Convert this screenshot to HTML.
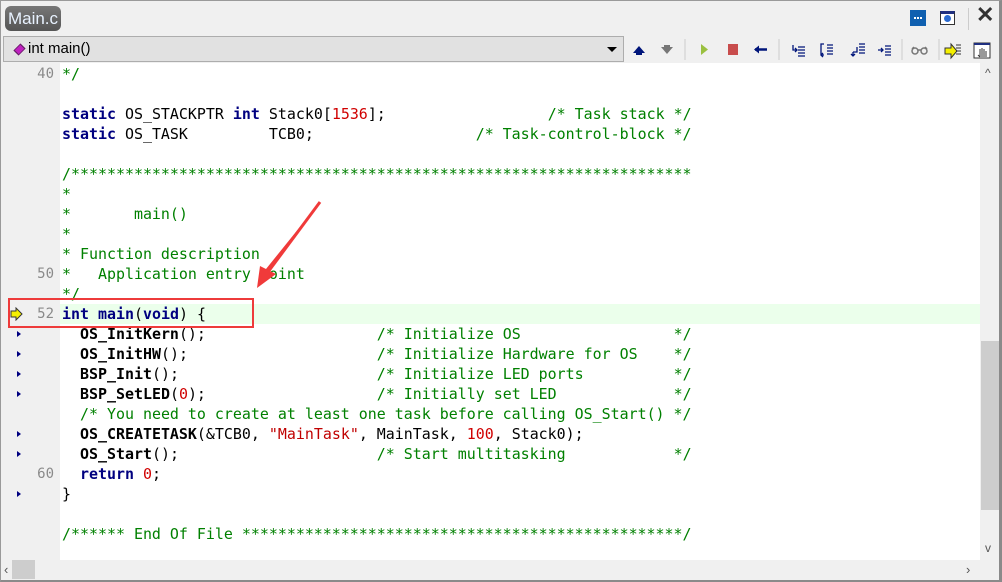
<!DOCTYPE html>
<html><head><meta charset="utf-8"><style>
*{margin:0;padding:0;box-sizing:border-box}
body{width:1002px;height:582px;overflow:hidden;background:#f0f0f0;font-family:"Liberation Sans",sans-serif;position:relative}
.frame{position:absolute;left:0;top:0;width:1002px;height:582px;border:1px solid #9a9a9a;border-right:3px solid #8a8a8a;border-bottom:2px solid #8a8a8a}
.tab{position:absolute;left:5px;top:6px;width:56px;height:25px;border-radius:6px;background:linear-gradient(#777,#555);color:#e8f2ff;font-size:17px;line-height:25px;text-align:center}
.combo{position:absolute;left:3px;top:36px;width:621px;height:26px;background:#e1e1e1;border:1px solid #adadad}
.combo span{position:absolute;left:24px;top:3px;font-size:15px;color:#000}
.dia{position:absolute;left:11px;top:8px;width:9px;height:9px;background:#c020c0;transform:rotate(45deg) scale(.8,1.1);border:1px solid #602060}
.dd{position:absolute;right:6px;top:10px;border-left:5px solid transparent;border-right:5px solid transparent;border-top:5px solid #000}
.code{position:absolute;left:1px;top:63px;width:979px;height:497px;background:#fff;overflow:hidden}
.gut{position:absolute;left:0;top:0;width:59px;height:497px;background:#f0f0f0}
.hl{position:absolute;left:59px;top:241px;width:920px;height:20px;background:#ebffeb}
.ln{position:absolute;left:0;width:1000px;height:20px;font-family:"DejaVu Sans Mono","Liberation Mono",monospace;font-size:14.95px;line-height:20px;white-space:pre}
.num{position:absolute;left:20px;width:33px;text-align:right;color:#8a8a8a;font-size:14px}
.t{position:absolute;left:61px}
.c{color:#008000}.k{color:#000080;font-weight:bold}.b{font-weight:bold;color:#000}.n{color:#d00000}.s{color:#c00000}
.mk{position:absolute;left:16px;top:7px;width:0;height:0;border-top:3px solid transparent;border-bottom:3px solid transparent;border-left:4px solid #000080}
.vs{position:absolute;left:981px;top:63px;width:18px;height:497px;background:#f0f0f0}
.hs{position:absolute;left:1px;top:560px;width:980px;height:20px;background:#f0f0f0}
</style></head><body>
<div class="frame"></div>
<div class="tab">Main.c</div>
<div style="position:absolute;left:910px;top:10px;width:16px;height:16px;background:#1060b0"></div>
<div style="position:absolute;left:914px;top:17px;width:8px;height:2px;border-top:2px dotted #fff"></div>
<div style="position:absolute;left:940px;top:11px;width:15px;height:14px;border:1px solid #333;border-top:3px solid #203080;background:#fff"></div>
<div style="position:absolute;left:944px;top:15px;width:7px;height:7px;border-radius:50%;background:#2a6ad0"></div>
<div style="position:absolute;left:968px;top:8px;width:1px;height:22px;background:#ccc"></div>
<div style="position:absolute;left:976px;top:2px;font-size:22px;font-weight:bold;color:#333">✕</div>
<div class="combo"><div class="dia"></div><span>int main()</span><div class="dd"></div></div>
<svg style="position:absolute;left:625px;top:36px" width="377" height="27">
<polygon points="8,17 14,10 20,17" fill="#00157a"/><rect x="11" y="16" width="6" height="3" fill="#00157a"/>
<rect x="39" y="9" width="6" height="3" fill="#777"/><polygon points="36,11 42,18 48,11" fill="#777"/>
<line x1="60" y1="3" x2="60" y2="24" stroke="#ccc"/>
<polygon points="76,8 83,13.5 76,19" fill="#9ac040"/>
<rect x="103" y="8" width="10" height="11" fill="#c84c4c"/>
<path d="M130,13.5h12" stroke="#00157a" stroke-width="2.5"/><polygon points="129,13.5 134,9.5 134,17.5" fill="#00157a"/>
<line x1="154" y1="3" x2="154" y2="24" stroke="#ccc"/>
<g stroke="#00157a" fill="none" stroke-width="1.3"><path d="M168,9v5h4M170,12l2,2-2,2"/><path d="M173,11h7M173,14h7M173,17h7M173,20h7"/>
<path d="M199,8h-3v11h3M196,19l2,-2M196,19l2,2"/><path d="M202,9h6M202,12h6M202,15h6M202,18h6"/>
<path d="M228,16v4M226,18l2,2 2,-2M228,16h4v-5"/><path d="M234,8h6M234,11h6M234,14h6M234,17h6"/>
<path d="M253,14h5M256,12l2,2-2,2"/><path d="M260,10h6M260,13h6M260,16h6M260,19h6"/></g>
<line x1="277" y1="3" x2="277" y2="24" stroke="#ccc"/>
<g stroke="#777" fill="none" stroke-width="1.5"><circle cx="290" cy="15" r="3"/><circle cx="299" cy="15" r="3"/><path d="M287,13l2,-2M302,13l-2,-2M293,14h3"/></g>
<line x1="314" y1="3" x2="314" y2="24" stroke="#ccc"/>
<polygon points="320,12 326,12 326,8 332,15 326,22 326,18 320,18" fill="#f5f000" stroke="#333"/>
<g stroke="#333"><path d="M331,9h5M331,12h5M331,15h5M331,18h5"/></g>
<rect x="349" y="7" width="16" height="15" fill="#fff" stroke="#333"/><rect x="349" y="7" width="16" height="2" fill="#203080"/>
<path d="M355,21v-8 M357,21v-9 M359,21v-8 M361,21v-6 M353,19l2,2" stroke="#333" fill="none"/>
</svg>
<div class="code">
<div class="gut"></div>
<div class="hl"></div>
<div class="ln" style="top:1px"><span class="num">40</span><span class="t c">*/</span></div>
<div class="ln" style="top:41px"><span class="t"><span class="k">static</span> OS_STACKPTR <span class="k">int</span> Stack0[<span class="n">1536</span>];                  <span class="c">/* Task stack */</span></span></div>
<div class="ln" style="top:61px"><span class="t"><span class="k">static</span> OS_TASK         TCB0;                  <span class="c">/* Task-control-block */</span></span></div>
<div class="ln" style="top:101px"><span class="t c">/*********************************************************************</span></div>
<div class="ln" style="top:121px"><span class="t c">*</span></div>
<div class="ln" style="top:141px"><span class="t c">*       main()</span></div>
<div class="ln" style="top:161px"><span class="t c">*</span></div>
<div class="ln" style="top:181px"><span class="t c">* Function description</span></div>
<div class="ln" style="top:201px"><span class="num">50</span><span class="t c">*   Application entry point</span></div>
<div class="ln" style="top:221px"><span class="t c">*/</span></div>
<div class="ln" style="top:241px"><span class="num">52</span><span class="t"><span class="k">int</span> <span class="k">main</span>(<span class="k">void</span>) {</span></div>
<div class="ln" style="top:261px"><div class="mk"></div><span class="t">  <span class="b">OS_InitKern</span>();                   <span class="c">/* Initialize OS                 */</span></span></div>
<div class="ln" style="top:281px"><div class="mk"></div><span class="t">  <span class="b">OS_InitHW</span>();                     <span class="c">/* Initialize Hardware for OS    */</span></span></div>
<div class="ln" style="top:301px"><div class="mk"></div><span class="t">  <span class="b">BSP_Init</span>();                      <span class="c">/* Initialize LED ports          */</span></span></div>
<div class="ln" style="top:321px"><div class="mk"></div><span class="t">  <span class="b">BSP_SetLED</span>(<span class="n">0</span>);                   <span class="c">/* Initially set LED             */</span></span></div>
<div class="ln" style="top:341px"><span class="t">  <span class="c">/* You need to create at least one task before calling OS_Start() */</span></span></div>
<div class="ln" style="top:361px"><div class="mk"></div><span class="t">  <span class="b">OS_CREATETASK</span>(&amp;TCB0, <span class="s">"MainTask"</span>, MainTask, <span class="n">100</span>, Stack0);</span></div>
<div class="ln" style="top:381px"><div class="mk"></div><span class="t">  <span class="b">OS_Start</span>();                      <span class="c">/* Start multitasking            */</span></span></div>
<div class="ln" style="top:401px"><span class="num">60</span><span class="t">  <span class="k">return</span> <span class="n">0</span>;</span></div>
<div class="ln" style="top:421px"><div class="mk"></div><span class="t">}</span></div>
<div class="ln" style="top:461px"><span class="t c">/****** End Of File *************************************************/</span></div>
</div>
<svg style="position:absolute;left:10px;top:307px" width="14" height="14"><polygon points="1,4 6,4 6,1 12,7 6,13 6,10 1,10" fill="#f5f000" stroke="#333"/></svg>
<div class="vs"><div style="position:absolute;left:0;top:278px;width:18px;height:169px;background:#cdcdcd"></div>
<div style="position:absolute;left:4px;top:3px;font-size:12px;color:#555">^</div>
<div style="position:absolute;left:4px;top:478px;font-size:12px;color:#555">v</div></div>
<div class="hs"><div style="position:absolute;left:11px;top:0;width:23px;height:19px;background:#cdcdcd"></div>
<div style="position:absolute;left:3px;top:2px;font-size:13px;color:#555">‹</div>
<div style="position:absolute;left:965px;top:2px;font-size:13px;color:#555">›</div></div>
<div style="position:absolute;left:8px;top:298px;width:246px;height:30px;border:2px solid #ee3b3b"></div>
<svg style="position:absolute;left:0;top:0" width="1002" height="582"><path d="M320,202 L268,270 L276,274 L257,288 L260,266 L266,269 Z" fill="#f03a3a"/><path d="M320,202 L268,272" stroke="#f03a3a" stroke-width="3"/></svg>
</body></html>
